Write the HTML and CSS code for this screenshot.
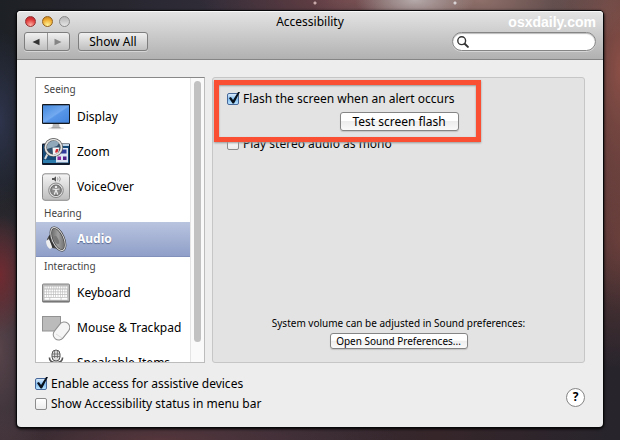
FILE: index.html
```html
<!DOCTYPE html>
<html lang="en">
<head>
<meta charset="utf-8">
<title>Accessibility</title>
<link rel="stylesheet" href="styles.css">
</head>
<body>
<main class="window">
  <header class="titlebar">
    <div class="title-row">
      <div class="lights">
        <button class="light red" aria-label="Close"></button>
        <button class="light yellow" aria-label="Minimize"></button>
        <button class="light off" aria-label="Zoom window"></button>
      </div>
      <h1 class="title">Accessibility</h1>
      <span class="watermark">osxdaily.com</span>
    </div>
    <div class="toolbar">
      <div class="segment">
        <button class="seg" aria-label="Back"><svg width="8" height="8" viewBox="0 0 8 8"><path d="M7.5 .8v6.4L.5 4z" fill="#333"/></svg></button>
        <button class="seg" aria-label="Forward"><svg width="8" height="8" viewBox="0 0 8 8"><path d="M.5 .8v6.4l7-3.2z" fill="#858585"/></svg></button>
      </div>
      <button class="show-all">Show All</button>
      <label class="search">
        <svg width="12" height="12" viewBox="0 0 12 12" fill="none" stroke="#333"><circle cx="4.700" cy="4.700" r="3.900" stroke-width="1.400"/><path d="M7.700 7.700l3.200 3.200" stroke-width="2" stroke-linecap="round"/></svg>
        <input type="search" aria-label="Search">
      </label>
    </div>
  </header>

  <div class="content">
    <div class="panes">
      <nav class="list" aria-label="Features">
        <div class="list-body">
          <h2 class="group first">Seeing</h2>
          <a class="item" href="#display">
            <svg class="icon" viewBox="0 0 28 28">
              <defs><linearGradient id="screen" x1="0" y1="0" x2="1" y2="1"><stop offset="0" stop-color="#4388dc"/><stop offset=".5" stop-color="#73aaf0"/><stop offset=".55" stop-color="#5796e8"/><stop offset="1" stop-color="#4384dd"/></linearGradient></defs>
              <ellipse cx="14" cy="25.300" rx="8" ry="1" fill="#ddd"/>
              <path d="M11 20h6l.7 4.500h-7.400z" fill="#b9b9b9"/><path d="M9.500 24.200h9v1h-9z" fill="#999"/>
              <rect x="0" y="1" width="28" height="20" rx="1" fill="#14181f"/>
              <rect x="1" y="2.300" width="26" height="17.400" fill="url(#screen)"/>
            </svg>
            <span>Display</span>
          </a>
          <a class="item" href="#zoom">
            <svg class="icon" viewBox="0 0 28 28">
              <rect x="0" y="5.500" width="28" height="21.500" rx="1" fill="#101b30"/>
              <rect x="1" y="7" width="26" height="18" fill="#164b79"/>
              <path d="M17 6h10v2H17z" fill="#bfd3e6"/>
              <path d="M1 22h14v3H1z" fill="#2c7dad"/>
              <rect x="14" y="10" width="12" height="14.500" fill="#dce5f3"/>
              <rect x="18.500" y="11.500" width="6" height="4" fill="#303a9c"/>
              <rect x="15.500" y="18.500" width="3.500" height="3.500" fill="#8b2b9b"/><rect x="21" y="18.500" width="3.500" height="3.500" fill="#51208a"/>
              <path d="M6 15l-3 6" stroke="#d9d9d9" stroke-width="2"/>
              <circle cx="11.500" cy="9.500" r="8" fill="#31506e" stroke="#555" stroke-width="3"/>
              <path d="M5 8a7 7 0 0 1 12-3l-2 3-10 3z" fill="#91a8bb"/>
              <path d="M10.500 9.500h7l-1.500 5.500-5 2z" fill="#f4f3f5"/>
              <path d="M14 11h2.500l-1 3.500H13z" fill="#cf2730"/>
              <circle cx="11.500" cy="9.500" r="8" fill="none" stroke="#e3e3e3" stroke-width="1.700"/>
            </svg>
            <span>Zoom</span>
          </a>
          <a class="item" href="#voiceover">
            <svg class="icon" viewBox="0 0 28 28">
              <defs><linearGradient id="metal" x1="0" y1="0" x2="0" y2="1"><stop offset="0" stop-color="#f4f4f4"/><stop offset="1" stop-color="#bdbdbd"/></linearGradient></defs>
              <rect x=".5" y=".8" width="27" height="26.500" rx="2.500" fill="url(#metal)" stroke="#8b8b8b"/>
              <path d="M10 5h2l2-1.700v5.400L12 7h-2z" fill="#555"/>
              <path d="M15.500 4.500q1 1.500 0 3M17.300 3.500q2 2.500 0 5" fill="none" stroke="#888" stroke-width=".8"/>
              <circle cx="14" cy="17.300" r="7.300" fill="#ddd" stroke="#888"/>
              <circle cx="14" cy="17.300" r="5.300" fill="#8a8a8a" stroke="#666"/>
              <circle cx="14" cy="14" r="1.200" fill="#eee"/>
              <path d="M10.500 16l3.500.5 3.500-.5M14 16v2.500M12.300 21.500l1.200-3.500h1l1.200 3.500" fill="none" stroke="#eee" stroke-width="1.200"/>
            </svg>
            <span>VoiceOver</span>
          </a>
          <h2 class="group">Hearing</h2>
          <a class="item selected" href="#audio" aria-current="page">
            <svg class="icon" viewBox="0 0 28 28">
              <defs><linearGradient id="cone" x1="0" y1="0" x2="1" y2="1"><stop offset="0" stop-color="#4e4e4e"/><stop offset=".5" stop-color="#a0a0a0"/><stop offset="1" stop-color="#555"/></linearGradient></defs>
              <path d="M5 14l5-8 6 18-6-1-5-3z" fill="#555"/>
              <path d="M4 16l3-2 4 8-3 2q-4-3-4-8z" fill="#efefef"/>
              <path d="M6.500 12l2-3 5 13-3 1z" fill="#333"/>
              <path d="M9 10l2 7" stroke="#eee" stroke-width="2"/>
              <ellipse cx="16" cy="14" rx="5.800" ry="12.300" transform="rotate(-24 16 14)" fill="url(#cone)" stroke="#383838" stroke-width="2.200"/>
              <ellipse cx="16" cy="14" rx="5.800" ry="12.300" transform="rotate(-24 16 14)" fill="none" stroke="#ddd" stroke-width="1"/>
              <ellipse cx="14.500" cy="15" rx="2" ry="4.500" transform="rotate(-25 14.500 15)" fill="#777"/>
            </svg>
            <span>Audio</span>
          </a>
          <h2 class="group">Interacting</h2>
          <a class="item" href="#keyboard">
            <svg class="icon" viewBox="0 0 28 28">
              <rect x=".5" y="5" width="27" height="18" rx="1" fill="#bcbcbc" stroke="#858585"/>
              <path d="M.5 22.500h27" stroke="#777" stroke-width="1.500"/>
              <g stroke="#fff" stroke-width="1.900"><path d="M2.500 8.500h23" stroke-dasharray="1.200 .6"/><path d="M2.500 11.500h23M2.500 14.300h23M2.500 17h23" stroke-dasharray="1.700 .6"/><path d="M2.500 19.800h5M8.200 19.800h10.500M19.400 19.800h6"/></g>
            </svg>
            <span>Keyboard</span>
          </a>
          <a class="item" href="#mouse">
            <svg class="icon" viewBox="0 0 28 28">
              <rect x=".5" y="2.500" width="18" height="14.500" fill="#bbb" stroke="#929292"/>
              <rect x="14" y="7" width="11" height="20" rx="5.500" transform="rotate(38 19.500 17)" fill="#f5f5f5" stroke="#8f8f8f"/>
              <path d="M14 20l6 4" stroke="#ddd" stroke-width="1"/>
            </svg>
            <span>Mouse &amp; Trackpad</span>
          </a>
          <a class="item" href="#speakable">
            <svg class="icon" viewBox="0 0 28 28">
              <rect x="10" y="1" width="8" height="11" rx="4" fill="#ddd" stroke="#555"/>
              <path d="M12.600 2v7M15.400 2v7M10 5h8M10 7.500h8" stroke="#666" stroke-width=".8"/>
              <path d="M7.500 8.500v.5q0 4.500 6.500 4.500t6.500-4.500v-.5M14 13v11M9 25h10" fill="none" stroke="#555" stroke-width="1.600"/>
            </svg>
            <span>Speakable Items</span>
          </a>
        </div>
        <div class="track"><div class="thumb"></div></div>
      </nav>

      <section class="pane">
        <div class="alert-options">
          <label class="check"><input type="checkbox" checked>Flash the screen when an alert occurs</label>
          <button class="push test">Test screen flash</button>
          <div class="callout"></div>
        </div>
        <label class="check"><input type="checkbox">Play stereo audio as mono</label>
        <div class="volume">
          <p class="note">System volume can be adjusted in Sound preferences:</p>
          <button class="push small">Open Sound Preferences...</button>
        </div>
      </section>
    </div>

    <footer class="footer">
      <div class="global">
        <label class="check"><input type="checkbox" checked>Enable access for assistive devices</label>
        <label class="check"><input type="checkbox">Show Accessibility status in menu bar</label>
      </div>
      <button class="help" aria-label="Help">?</button>
    </footer>
  </div>
</main>
</body>
</html>
```
FILE: styles.css
```css
* { box-sizing: border-box; }

body {
  margin: 0;
  height: 100vh;
  min-height: 400px;
  padding: 11px 17px 13px;
  display: flex;
  font: 12px/16px "Noto Sans", "Open Sans", sans-serif;
  color: #000;
  background-color: #29232a;
  background-image:
    radial-gradient(circle at 455px 3px, #d8d4d6 0 1px, transparent 2px),
    radial-gradient(circle at 315px 3px, #c9a9a9 0 1px, transparent 2px),
    radial-gradient(ellipse 60px 24px at 415px 0, #b5aaaa, transparent),
    radial-gradient(ellipse 170px 60px at 480px 0, #8f706a, transparent),
    radial-gradient(ellipse 150px 40px at 350px 0, #6d4349, transparent),
    radial-gradient(ellipse 70px 240px at 100% 70px, #8a4f46, transparent),
    radial-gradient(ellipse 60px 130px at 100% 240px, #5c3836, transparent),
    radial-gradient(ellipse 30px 60px at 0 275px, #702a30, transparent),
    radial-gradient(ellipse 50px 170px at 0 350px, #57434a, transparent),
    radial-gradient(ellipse 30px 90px at 0 120px, #2e344c, transparent),
    radial-gradient(ellipse 240px 40px at 160px 100%, #55363c, transparent),
    linear-gradient(90deg, #1d2025, #302c38 35%, #36262a 70%, #27242c);
}

button, input { font: inherit; color: inherit; margin: 0; padding: 0; white-space: nowrap; }
h1, h2, p { margin: 0; font-size: 12px; font-weight: 400; }

.window {
  flex: 1;
  min-width: 0;
  display: flex;
  flex-direction: column;
  background: #ededed;
  border-radius: 4px;
  box-shadow: 0 0 0 1px #08080a, 0 1px 3px 1px #000;
}

.titlebar {
  padding: 0 7px 8px;
  background: linear-gradient(#e4e4e4, #cdcdcd 45%, #b1b1b1);
  border-bottom: 1px solid #858585;
  border-radius: 4px 4px 0 0;
  box-shadow: inset 0 1px #f8f8f8;
}

.title-row {
  height: 21px;
  display: grid;
  grid-template-columns: 1fr auto 1fr;
  align-items: center;
}
.lights { display: flex; gap: 6px; padding-left: 1px; }
.light {
  width: 11px;
  height: 11px;
  border: 1px solid #777;
  border-radius: 50%;
}
.red { border-color: #963232; background: radial-gradient(circle at 50% 90%, #ffb3a6, #e03a3a 60%, #b52227); }
.yellow { border-color: #94611d; background: radial-gradient(circle at 50% 90%, #fff49a, #efac31 60%, #c07a1b); }
.off { border-color: #8a8a8a; background: linear-gradient(#b5b5b5, #e5e5e5); }
.watermark {
  justify-self: end;
  font: bold 14px/20px "Liberation Sans", Arial, sans-serif;
  color: #fff;
}

.toolbar { display: flex; align-items: center; gap: 8px; }
.segment, .show-all {
  height: 19px;
  border: 1px solid #7e7e7e;
  border-radius: 3px;
  background: linear-gradient(#f0f0f0, #bfbfbf);
  box-shadow: 0 1px #d6d6d6;
}
.segment { display: flex; width: 46px; }
.seg { flex: 1; border: 0; background: none; display: grid; place-items: center; }
.seg + .seg { border-left: 1px solid #959595; }
.show-all { width: 70px; line-height: 16px; }
.search {
  width: 144px;
  height: 19px;
  margin-left: auto;
  padding: 0 6px 0 4px;
  display: flex;
  align-items: center;
  gap: 4px;
  border: 1px solid #858585;
  border-radius: 10px;
  background: #fff;
  box-shadow: inset 0 1px 1px #bbb, 0 1px #d6d6d6;
}
.search input { flex: 1; min-width: 0; border: 0; background: none; outline: 0; appearance: none; }

.content {
  flex: 1;
  min-height: 0;
  display: flex;
  flex-direction: column;
  padding: 17px 18px 14px;
}
.panes { flex: 1; min-height: 0; display: flex; gap: 7px; }

.list {
  width: 170px;
  display: flex;
  overflow: hidden;
  background: #fff;
  border: 1px solid #bcbcbc;
  border-top-color: #888;
}
.list-body { flex: 1; min-width: 0; }
.group { height: 18px; padding-left: 8px; font-size: 10px; line-height: 18px; color: #444; }
.group.first { height: 21px; line-height: 22px; }
.item {
  height: 35px;
  padding-left: 6px;
  display: flex;
  align-items: center;
  gap: 7px;
  color: #000;
  text-decoration: none;
  white-space: nowrap;
}
.icon { width: 28px; height: 28px; flex: none; }
.selected {
  color: #fff;
  font-weight: 700;
  background: linear-gradient(#b9c4df, #8f9fc8);
  border-bottom: 1px solid #8190bb;
  text-shadow: 0 1px 1px #5a6a92;
}
.track { width: 14px; padding: 3px; background: #fafafa; border-left: 1px solid #e4e4e4; }
.thumb { width: 7px; height: 94%; border-radius: 4px; background: #c1c1c1; }

.pane {
  flex: 1;
  min-width: 0;
  display: flex;
  flex-direction: column;
  padding: 12px 14px 13px;
  background: #e3e3e3;
  border: 1px solid #c6c6c6;
  border-radius: 3px;
}
.alert-options {
  position: relative;
  align-self: flex-start;
  display: flex;
  flex-direction: column;
  align-items: flex-end;
  gap: 4px;
  margin-bottom: 4px;
}
.alert-options .check { align-self: flex-start; padding-right: 4px; }
.callout {
  position: absolute;
  inset: -10px -22px -11px -13px;
  border: 5px solid #fb4f34;
  box-shadow: 0 1px 2px #999, inset 0 1px 2px #999;
  pointer-events: none;
}

.check { display: flex; align-items: center; gap: 4px; height: 18px; white-space: nowrap; }
.check input {
  appearance: none;
  flex: none;
  width: 12px;
  height: 12px;
  display: grid;
  overflow: visible;
  border: 1px solid #8c8c8c;
  border-radius: 2px;
  background: linear-gradient(#fff, #ececec);
}
.check input:checked { border-color: #45679a; background: linear-gradient(#d9eafb, #83bdf0 50%, #b8e3ff); }
.check input:checked::before {
  content: "";
  width: 12px;
  height: 12px;
  margin-top: -2px;
  background: #08101c;
  clip-path: polygon(8% 50%, 24% 42%, 42% 66%, 84% 0, 100% 0, 50% 96%, 38% 96%);
}

.push {
  height: 19px;
  border: 1px solid #858585;
  border-radius: 3px;
  background: linear-gradient(#fff, #fff 45%, #ededed 50%, #fafafa);
  box-shadow: 0 1px 1px #c4c4c4;
  line-height: 16px;
}
.test { width: 119px; }
.volume { margin-top: auto; display: flex; flex-direction: column; align-items: center; gap: 2px; }
.note { font-size: 10px; white-space: nowrap; }
.small { width: 138px; height: 16px; font-size: 10px; line-height: 13px; }

.footer { display: flex; justify-content: space-between; align-items: center; padding-top: 12px; }
.global { display: flex; flex-direction: column; gap: 2px; }
.help {
  width: 19px;
  height: 19px;
  margin-top: 6px;
  border: 1px solid #858585;
  border-radius: 50%;
  background: #fff;
  font-weight: 700;
  line-height: 16px;
}
```
